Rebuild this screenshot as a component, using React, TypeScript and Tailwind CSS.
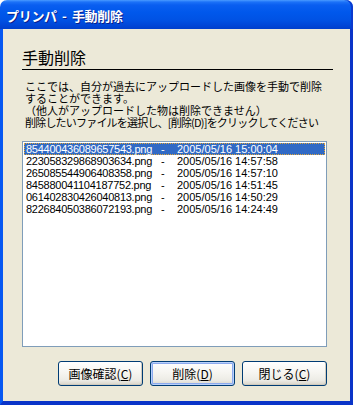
const files = [
  { name: '854400436089657543.png', date: '2005/05/16 15:00:04' },
  { name: '223058329868903634.png', date: '2005/05/16 14:57:58' },
  { name: '265085544906408358.png', date: '2005/05/16 14:57:10' },
  { name: '845880041104187752.png', date: '2005/05/16 14:51:45' },
  { name: '061402830426040813.png', date: '2005/05/16 14:50:29' },
  { name: '822684050386072193.png', date: '2005/05/16 14:24:49' },
];

function XpButton({ label, keyChar, isDefault }: { label: string; keyChar: string; isDefault?: boolean }) {
  return (
    <button
      className={`w-[85px] h-[25px] rounded-[3px] border border-[#003C74] text-[12px] text-black leading-none flex items-center justify-center bg-[linear-gradient(to_bottom,#FFFFFF_0%,#F5F4EF_50%,#ECEBE5_80%,#D8D3C8_100%)] ${
        isDefault
          ? 'shadow-[inset_0_0_0_1px_#B9D1FA,inset_0_0_0_2px_#8CAAEE]'
          : 'shadow-[inset_-1px_-1px_0_#D0CBBE]'
      }`}
    >
      {label}(<span className="underline underline-offset-1">{keyChar}</span>)
    </button>
  );
}

export default function App() {
  return (
    <div className="w-[353px] h-[405px] flex flex-col font-['Noto_Sans_CJK_JP',sans-serif] bg-white">
      {/* Title bar */}
      <div className="h-[29px] shrink-0 rounded-t-[7px] flex items-center pl-[6px] pt-[1px] bg-[linear-gradient(to_bottom,#4A9BFF_0px,#1C72F8_2px,#0A5EF0_5px,#0058EC_12px,#0052E4_20px,#0047D8_25px,#003FCC_29px)] shadow-[inset_-2px_0_0_#0A3ACF]">
        <span className="text-white font-bold text-[13px] leading-none [text-shadow:1px_1px_0_#0A1E8A] whitespace-pre tracking-[-0.3px]">
          プリンパ  -  手動削除
        </span>
      </div>

      {/* Window body */}
      <div className="flex-1 flex flex-col bg-[#ECE9D8] border-l-[3px] border-r-[3px] border-b-[4px] border-l-[#0758F2] border-r-[#0A34C8] border-b-[#0A34C8] pl-[19px] pr-[17px]">
        <div className="mt-[17px] h-[22px] text-[16px] leading-[22px] text-black">手動削除</div>
        <div className="mt-[1px] border-t border-black" />

        <div className="mt-[10px] ml-[3px] text-[11px] leading-[12px] text-black whitespace-nowrap">
          <div>ここでは、自分が過去にアップロードした画像を手動で削除</div>
          <div>することができます。</div>
          <div>（他人がアップロードした物は削除できません）</div>
          <div className="tracking-[-0.8px]">削除したいファイルを選択し、[削除(D)]をクリックしてください</div>
        </div>

        <div className="mt-[13px] mr-[6px] h-[206px] border border-[#7F9DB9] bg-white p-[1px]">
          {files.map((f, i) => (
            <div
              key={f.name}
              className={`h-[12px] flex items-center pl-[1px] text-[11px] leading-none font-['Liberation_Sans',sans-serif] whitespace-nowrap ${
                i === 0 ? 'bg-[#316AC5] text-white border border-dotted border-[#E0A63A]' : 'text-black border border-transparent'
              }`}
            >
              <span className="w-[135px] tracking-[-0.25px]">{f.name}</span>
              <span className="w-[16px]">-</span>
              <span>{f.date}</span>
            </div>
          ))}
        </div>

        <div className="mt-[14px] mr-[6px] flex justify-end gap-[7px]">
          <XpButton label="画像確認" keyChar="C" />
          <XpButton label="削除" keyChar="D" isDefault />
          <XpButton label="閉じる" keyChar="C" />
        </div>
      </div>
    </div>
  );
}
